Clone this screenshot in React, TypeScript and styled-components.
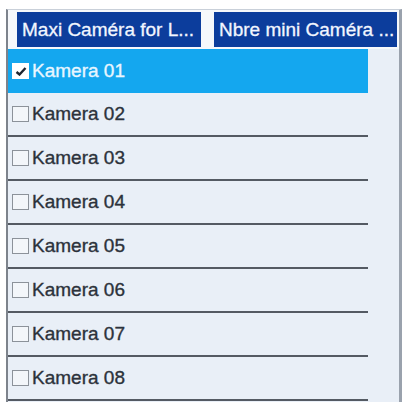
import React from "react";
import styled, { createGlobalStyle } from "styled-components";

const Global = createGlobalStyle`
  html, body { margin: 0; padding: 0; background: #ffffff; }
  body { font-family: "Liberation Sans", Arial, sans-serif; }
`;

const Frame = styled.div`
  margin: 9px 0 0 6px;
  width: 391px;
  height: 392px;
  border-left: 2px solid #7d838c;
  border-right: 3px solid #9aa2ad;
  border-top: 1px solid #c9d0d9;
  background: #e9eff7;
  display: flex;
  flex-direction: column;
  overflow: hidden;
`;

const HeaderBar = styled.div`
  display: flex;
  gap: 13px;
  padding: 2px 0 2px 9px;
  background: #f6f8fb;
`;

const HeaderCell = styled.div<{ $w: number }>`
  width: ${(p) => p.$w}px;
  height: 35px;
  background: #0c3d9c;
  color: #f2f6ff;
  font-size: 19px;
  line-height: 35px;
  padding-left: 5px;
  box-sizing: border-box;
  white-space: nowrap;
  overflow: hidden;
  -webkit-text-stroke: 0.3px #f2f6ff;
`;

const List = styled.div`
  display: flex;
  flex-direction: column;
  width: 360px;
`;

const Row = styled.div<{ $selected?: boolean }>`
  height: 44px;
  box-sizing: border-box;
  display: flex;
  align-items: center;
  gap: 3px;
  padding-left: 4px;
  background: ${(p) => (p.$selected ? "#14a7ef" : "transparent")};
  border-bottom: ${(p) => (p.$selected ? "none" : "2px solid #545a63")};
  color: ${(p) => (p.$selected ? "#e8f6ff" : "#2c323b")};
  font-size: 19px;
  -webkit-text-stroke: 0.35px currentColor;
`;

const Box = styled.span<{ $checked?: boolean }>`
  width: 17px;
  height: 16px;
  box-sizing: border-box;
  border: 1.5px solid ${(p) => (p.$checked ? "#ffffff" : "#8c929a")};
  background: ${(p) => (p.$checked ? "#ffffff" : "#f3f6fa")};
  display: flex;
  align-items: center;
  justify-content: center;
  flex: none;
`;

const cams = ["01", "02", "03", "04", "05", "06", "07", "08"];

export default function App() {
  return (
    <>
      <Global />
      <Frame>
        <HeaderBar>
          <HeaderCell $w={184}>Maxi Caméra for L...</HeaderCell>
          <HeaderCell $w={183}>Nbre mini Caméra ...</HeaderCell>
        </HeaderBar>
        <List>
          {cams.map((c, i) => (
            <Row key={c} $selected={i === 0}>
              <Box $checked={i === 0}>
                {i === 0 && (
                  <svg width="12" height="10" viewBox="0 0 12 10">
                    <path d="M1.5 6 L4.5 8.5 L10.5 2" stroke="#1d2530" strokeWidth="2.4" fill="none" />
                  </svg>
                )}
              </Box>
              Kamera {c}
            </Row>
          ))}
        </List>
      </Frame>
    </>
  );
}
